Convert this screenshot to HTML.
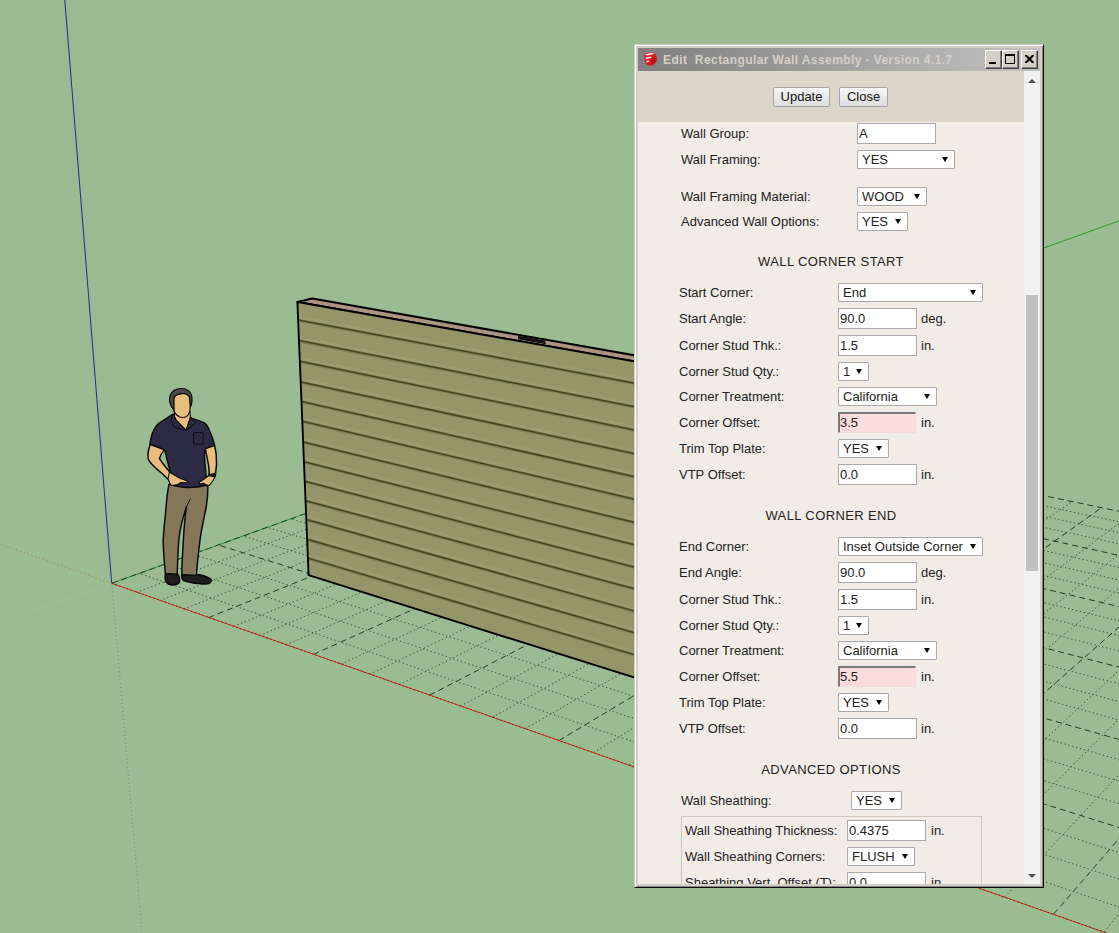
<!DOCTYPE html>
<html lang="en"><head><meta charset="utf-8"><title>Edit Rectangular Wall Assembly</title>
<style>
html,body{margin:0;padding:0}
body{width:1119px;height:933px;overflow:hidden;background:#9bbc92;position:relative;font-family:"Liberation Sans",Arial,sans-serif;font-size:13px;color:#222}
.scene{position:absolute;left:0;top:0}
.ax{stroke-width:1}
.axd{stroke-width:1.1;stroke-dasharray:1.2 2.8}
.grid line{stroke:#1e2a1a;stroke-width:1}
.gd{stroke-dasharray:1.4 2.6;opacity:.72;stroke-width:1.2}
.gm{stroke:#0c140c;stroke-dasharray:6 4;opacity:.9;stroke-width:1.3}
.win{position:absolute;left:634px;top:44px;width:408px;height:842px;background:#d4d0c8;border:1px solid;border-color:#d4d0c8 #0c0c0c #0c0c0c #d4d0c8;box-shadow:inset 1px 1px 0 #fff,inset -1px -1px 0 #858585}
.tb{position:absolute;left:3px;top:3px;width:402px;height:23px;background:linear-gradient(90deg,#808080 0%,#c2c2c2 100%)}
.ico{position:absolute;left:4px;top:3px}
.tt{position:absolute;left:25px;top:4px;font-weight:bold;font-size:12px;line-height:16px;color:#d4d0c8;white-space:pre;letter-spacing:.42px}
.cb{position:absolute;top:2px;width:15px;height:17px;background:#d4d0c8;border:1px solid;border-color:#fff #404040 #404040 #fff;box-shadow:inset -1px -1px 0 #808080;display:block}
.cb svg{position:absolute;left:3px;top:4px}
.mn{position:absolute;left:3px;top:11px;width:7px;height:2px;background:#000}
.mx{position:absolute;left:2px;top:3px;width:8px;height:7px;border:1px solid #000;border-top-width:2px}
.client{position:absolute;left:3px;top:26px;width:402px;height:813px;background:#f1ede6;overflow:hidden}
.hdr{position:absolute;left:0;top:0;width:386px;height:51px;background:#dcd5c9}
.btn{position:absolute;top:16px;height:18px;line-height:18px;text-align:center;border:1px solid #a5a5a5;border-radius:2px;background:linear-gradient(#f8f8f8,#dcdcdc);color:#111}
.l{position:absolute;line-height:16px;height:16px;white-space:nowrap}
.hd{position:absolute;left:0;width:386px;letter-spacing:.38px;text-align:center;line-height:16px;height:16px;white-space:nowrap}
.i{position:absolute;height:19px;line-height:19px;border:1px solid #a9a9a9;background:#fff;text-indent:1px;white-space:nowrap;overflow:hidden}
.ro{background:#fddcdc;border-color:#7a7a7a #f3dcd8 #f3dcd8 #7a7a7a;border-width:2px 1px 1px 2px;height:18px;line-height:17px;text-indent:0}
.s{position:absolute;height:17px;line-height:17px;border:1px solid #a9a9a9;border-radius:1px;background:#fff;text-indent:4px;white-space:nowrap;overflow:hidden}
.s b{position:absolute;right:6px;top:6px;width:0;height:0;border-left:3.4px solid transparent;border-right:3.4px solid transparent;border-top:5.8px solid #000}
.fs{position:absolute;border:1px solid #c9c6c0}
.sb{position:absolute;right:0;top:0;width:16px;height:813px;background:#f1f1f1}
.th{position:absolute;left:2px;top:224px;width:12px;height:276px;background:#c1c1c1}
.up{position:absolute;left:4px;top:8px;border-left:4px solid transparent;border-right:4px solid transparent;border-bottom:4px solid #505050}
.dn{position:absolute;left:4px;bottom:6px;border-left:4px solid transparent;border-right:4px solid transparent;border-top:4px solid #505050}
</style></head><body>
<svg class="scene" width="1119" height="933" viewBox="0 0 1119 933">
<g class="grid"><line class="gd" x1="136.2" y1="592.4" x2="628.2" y2="409.7"/><line class="gd" x1="159.7" y1="600.6" x2="649.3" y2="414.1"/><line class="gd" x1="183.8" y1="609" x2="670.7" y2="418.5"/><line class="gm" x1="208.4" y1="617.7" x2="692.5" y2="423.1"/><line class="gd" x1="233.7" y1="626.5" x2="714.8" y2="427.7"/><line class="gd" x1="259.6" y1="635.6" x2="737.3" y2="432.3"/><line class="gd" x1="286.1" y1="644.9" x2="760.3" y2="437.1"/><line class="gm" x1="313.3" y1="654.5" x2="783.8" y2="441.9"/><line class="gd" x1="341.2" y1="664.2" x2="807.6" y2="446.9"/><line class="gd" x1="369.9" y1="674.3" x2="831.9" y2="451.9"/><line class="gd" x1="399.3" y1="684.6" x2="856.6" y2="457"/><line class="gm" x1="429.5" y1="695.2" x2="881.8" y2="462.2"/><line class="gd" x1="460.5" y1="706.1" x2="907.4" y2="467.5"/><line class="gd" x1="492.4" y1="717.2" x2="933.6" y2="472.9"/><line class="gd" x1="525.2" y1="728.7" x2="960.2" y2="478.5"/><line class="gm" x1="558.9" y1="740.6" x2="987.4" y2="484.1"/><line class="gd" x1="593.6" y1="752.7" x2="1015.1" y2="489.8"/><line class="gd" x1="629.3" y1="765.2" x2="1043.3" y2="495.7"/><line class="gd" x1="666.1" y1="778.1" x2="1072.1" y2="501.6"/><line class="gm" x1="703.9" y1="791.4" x2="1101.5" y2="507.7"/><line class="gd" x1="743" y1="805.1" x2="1131.5" y2="513.9"/><line class="gd" x1="783.2" y1="819.2" x2="1162.1" y2="520.2"/><line class="gd" x1="824.7" y1="833.8" x2="1193.3" y2="526.7"/><line class="gm" x1="867.6" y1="848.8" x2="1225.2" y2="533.3"/><line class="gd" x1="911.8" y1="864.3" x2="1257.8" y2="540"/><line class="gd" x1="957.6" y1="880.3" x2="1291" y2="546.9"/><line class="gd" x1="1004.8" y1="896.9" x2="1325" y2="554"/><line class="gm" x1="1053.7" y1="914" x2="1359.8" y2="561.2"/><line class="gd" x1="1104.3" y1="931.8" x2="1395.3" y2="568.5"/><line class="gd" x1="1156.7" y1="950.1" x2="1431.6" y2="576"/><line class="gd" x1="1211" y1="969.2" x2="1468.7" y2="583.7"/><line class="gm" x1="1267.2" y1="988.9" x2="1506.7" y2="591.6"/><line class="gd" x1="1325.6" y1="1009.4" x2="1545.5" y2="599.6"/><line class="gd" x1="1386.3" y1="1030.6" x2="1585.3" y2="607.8"/><line class="gd" x1="141.3" y1="574.2" x2="1399.4" y2="1002.6"/><line class="gd" x1="168.4" y1="564.4" x2="1412" y2="976.1"/><line class="gd" x1="194.8" y1="554.8" x2="1423.9" y2="950.8"/><line class="gm" x1="220.3" y1="545.6" x2="1435.2" y2="926.7"/><line class="gd" x1="245.1" y1="536.6" x2="1446" y2="903.7"/><line class="gd" x1="269.1" y1="527.9" x2="1456.3" y2="881.8"/><line class="gd" x1="292.5" y1="519.4" x2="1466.2" y2="860.8"/><line class="gm" x1="315.2" y1="511.2" x2="1475.6" y2="840.7"/><line class="gd" x1="337.3" y1="503.2" x2="1484.7" y2="821.5"/><line class="gd" x1="358.8" y1="495.5" x2="1493.3" y2="803.1"/><line class="gd" x1="379.7" y1="487.9" x2="1501.6" y2="785.5"/><line class="gm" x1="400" y1="480.5" x2="1509.6" y2="768.6"/><line class="gd" x1="419.8" y1="473.4" x2="1517.3" y2="752.3"/><line class="gd" x1="439.1" y1="466.4" x2="1524.6" y2="736.6"/><line class="gd" x1="457.9" y1="459.6" x2="1531.7" y2="721.6"/><line class="gm" x1="476.2" y1="453" x2="1538.6" y2="707"/><line class="gd" x1="494" y1="446.5" x2="1545.1" y2="693.1"/><line class="gd" x1="511.4" y1="440.2" x2="1551.5" y2="679.6"/><line class="gd" x1="528.4" y1="434.1" x2="1557.6" y2="666.6"/><line class="gm" x1="545" y1="428.1" x2="1563.5" y2="654"/><line class="gd" x1="561.2" y1="422.2" x2="1569.2" y2="641.9"/><line class="gd" x1="577" y1="416.5" x2="1574.8" y2="630.2"/><line class="gd" x1="592.4" y1="410.9" x2="1580.1" y2="618.8"/><line class="gm" x1="607.5" y1="405.4" x2="1585.3" y2="607.8"/></g>
<line class="ax" stroke="#1d2d90" x1="64.8" y1="0" x2="111.7" y2="583.3"/>
<line class="axd" opacity=".6" stroke="#55749f" x1="111.7" y1="583.3" x2="142" y2="933"/>
<line class="ax" stroke="#d02a1c" x1="111.7" y1="583.3" x2="1119" y2="937.4"/>
<line class="axd" opacity=".6" stroke="#b8684c" x1="111.7" y1="583.3" x2="0" y2="544.2"/>
<line class="ax" stroke="#2f962f" x1="111.7" y1="583.3" x2="1119" y2="220.9"/>
<line class="axd" opacity=".75" stroke="#b2cfa8" x1="111.7" y1="583.3" x2="0" y2="623"/>
<line stroke="#101010" stroke-width="1.1" stroke-dasharray="1.5 2.5" opacity=".42" x1="111.7" y1="583.3" x2="1119" y2="937.4"/>
<line stroke="#0c140c" stroke-width="1.1" stroke-dasharray="6 4" opacity=".55" x1="111.7" y1="583.3" x2="607.5" y2="404.9"/>
<polygon fill="#ab9482" stroke="#000" stroke-width="2.1" stroke-linejoin="round" points="297.4,302 312.2,298.5 700,366.9 700,373"/>
<polygon fill="#94966a" points="297.4,302 700,373 700,698.1 308.6,575.2"/>
<line stroke="#a0a274" stroke-width="3" opacity=".55" x1="298.1" y1="317" x2="700" y2="392.5"/>
<line stroke="#7d7f55" stroke-width="3.2" x1="298.1" y1="320.3" x2="700" y2="395.8"/>
<line stroke="#44461f" stroke-width="1.5" x1="298.1" y1="320" x2="700" y2="395.5"/>
<line stroke="#a0a274" stroke-width="3" opacity=".55" x1="299" y1="337.6" x2="700" y2="416.7"/>
<line stroke="#7d7f55" stroke-width="3.2" x1="299" y1="340.9" x2="700" y2="420"/>
<line stroke="#44461f" stroke-width="1.5" x1="299" y1="340.6" x2="700" y2="419.7"/>
<line stroke="#a0a274" stroke-width="3" opacity=".55" x1="299.8" y1="358.2" x2="700" y2="440.5"/>
<line stroke="#7d7f55" stroke-width="3.2" x1="299.8" y1="361.5" x2="700" y2="443.8"/>
<line stroke="#44461f" stroke-width="1.5" x1="299.8" y1="361.2" x2="700" y2="443.5"/>
<line stroke="#a0a274" stroke-width="3" opacity=".55" x1="300.7" y1="378.9" x2="700" y2="464.7"/>
<line stroke="#7d7f55" stroke-width="3.2" x1="300.7" y1="382.2" x2="700" y2="468"/>
<line stroke="#44461f" stroke-width="1.5" x1="300.7" y1="381.9" x2="700" y2="467.7"/>
<line stroke="#a0a274" stroke-width="3" opacity=".55" x1="301.5" y1="398.4" x2="700" y2="488.6"/>
<line stroke="#7d7f55" stroke-width="3.2" x1="301.5" y1="401.7" x2="700" y2="491.9"/>
<line stroke="#44461f" stroke-width="1.5" x1="301.5" y1="401.4" x2="700" y2="491.6"/>
<line stroke="#a0a274" stroke-width="3" opacity=".55" x1="302.3" y1="418.2" x2="700" y2="511.6"/>
<line stroke="#7d7f55" stroke-width="3.2" x1="302.3" y1="421.5" x2="700" y2="514.9"/>
<line stroke="#44461f" stroke-width="1.5" x1="302.3" y1="421.2" x2="700" y2="514.6"/>
<line stroke="#a0a274" stroke-width="3" opacity=".55" x1="303.1" y1="438.9" x2="700" y2="535.3"/>
<line stroke="#7d7f55" stroke-width="3.2" x1="303.1" y1="442.2" x2="700" y2="538.6"/>
<line stroke="#44461f" stroke-width="1.5" x1="303.1" y1="441.9" x2="700" y2="538.3"/>
<line stroke="#a0a274" stroke-width="3" opacity=".55" x1="304" y1="458.7" x2="700" y2="558.3"/>
<line stroke="#7d7f55" stroke-width="3.2" x1="304" y1="462" x2="700" y2="561.6"/>
<line stroke="#44461f" stroke-width="1.5" x1="304" y1="461.7" x2="700" y2="561.3"/>
<line stroke="#a0a274" stroke-width="3" opacity=".55" x1="304.8" y1="478.2" x2="700" y2="581.2"/>
<line stroke="#7d7f55" stroke-width="3.2" x1="304.8" y1="481.5" x2="700" y2="584.5"/>
<line stroke="#44461f" stroke-width="1.5" x1="304.8" y1="481.2" x2="700" y2="584.2"/>
<line stroke="#a0a274" stroke-width="3" opacity=".55" x1="305.5" y1="497.7" x2="700" y2="603.3"/>
<line stroke="#7d7f55" stroke-width="3.2" x1="305.5" y1="501" x2="700" y2="606.6"/>
<line stroke="#44461f" stroke-width="1.5" x1="305.5" y1="500.7" x2="700" y2="606.3"/>
<line stroke="#a0a274" stroke-width="3" opacity=".55" x1="306.3" y1="516.5" x2="700" y2="626.4"/>
<line stroke="#7d7f55" stroke-width="3.2" x1="306.3" y1="519.8" x2="700" y2="629.7"/>
<line stroke="#44461f" stroke-width="1.5" x1="306.3" y1="519.5" x2="700" y2="629.4"/>
<line stroke="#a0a274" stroke-width="3" opacity=".55" x1="307.1" y1="536.3" x2="700" y2="648.4"/>
<line stroke="#7d7f55" stroke-width="3.2" x1="307.1" y1="539.6" x2="700" y2="651.7"/>
<line stroke="#44461f" stroke-width="1.5" x1="307.1" y1="539.3" x2="700" y2="651.4"/>
<line stroke="#a0a274" stroke-width="3" opacity=".55" x1="307.9" y1="555.1" x2="700" y2="671.1"/>
<line stroke="#7d7f55" stroke-width="3.2" x1="307.9" y1="558.4" x2="700" y2="674.4"/>
<line stroke="#44461f" stroke-width="1.5" x1="307.9" y1="558.1" x2="700" y2="674.1"/>
<polyline fill="none" stroke="#000" stroke-width="1.9" stroke-linejoin="round" points="700,373 297.4,302 308.6,575.2 700,698.1"/>
<polygon fill="#111" points="518,335.8 545,340.6 546,344.2 518,339.2"/>
</svg>
<svg class="scene" width="1119" height="933" viewBox="0 0 1119 933">
<g stroke="#0a0a0a" stroke-width="1.5" stroke-linejoin="round" stroke-linecap="round">
<!-- shoes -->
<path fill="#1f1f1f" d="M165.6 573 C164.6 577.5 165 582 168.4 584 C172.4 585.6 177.4 585 179.4 582.6 C180 579.6 179 576 177.4 573.6 Z"/>
<path fill="#1f1f1f" d="M182 574.4 C181.4 577.2 182 579.6 184 580.8 C190 582.8 198 584.2 206 584 C210 583.8 212 581.8 211 579.6 C208 577 202 575 196.6 574.6 Z"/>
<!-- pants -->
<path fill="#87775a" d="M168.9 484.6 C167.4 492 166.6 500 166 508 C165 520 163.6 530 163.2 540 C163.2 552 164.4 562 165.4 573.4 L177.2 574.2 C177.6 562 178 550 178.8 540 C180 528 183.4 516 186.4 507 C185 518 183.8 530 183.4 540 C182.6 552 182 562 181.8 574.4 L196.4 575.6 C197 564 198.6 552 200 540 C201.6 528 204.6 516 206.4 506 C207.6 498 208 492 207.8 485.6 Z"/>
<path fill="none" stroke-width="1" d="M186.4 507 C187.6 504 189 501.6 190.4 499"/>
<!-- arms -->
<path fill="#e9bd7d" d="M150.6 443.6 C148.6 448.6 147.4 454.6 148.2 458.8 C149.6 463.4 155 467.6 160.4 472 C164.4 475.4 168.6 480.4 172.6 482.6 L178.6 482.2 C177.6 479 174.6 476.4 171.2 473.6 C167 468.8 162.4 463.6 159.4 458.4 C160.4 455.2 162.4 452.2 164.6 449.4 Z"/>
<path fill="#e9bd7d" d="M205.2 448.2 C206.2 454.2 207.8 460.2 208.6 465.8 C209 469.4 209.4 472.4 209 475.2 C207.4 478.4 205.4 481 203.6 483.2 L209.2 484.6 C212 481.4 214.6 478.4 215.4 474.6 C216.6 468.6 216.8 460.4 216.2 454.4 C215.8 451 215.2 448 214.4 445 Z"/>
<path fill="#222" stroke-width=".8" d="M209.2 474.4 L215.6 473 L215.8 475.4 L209.2 476.6 Z"/>
<!-- shirt -->
<path fill="#2d2a44" d="M172.6 414.4 C167.6 417.6 162.4 420.8 158 424 C154.6 427.4 152.6 432 151.4 436.6 C150.6 439.6 150.2 442 150 444.2 L164.4 449.8 C165.2 452 165.8 454 166.2 456 C167.4 462 169.4 468 170.8 473.4 C171 477 170.6 481 170 484 C176 486.6 183 487.6 189.6 487.4 C196 487.4 202.6 486.2 207.8 484.2 C207.2 481 206.4 478 206 475 C205.4 468 204.6 461 204.4 455 C204.6 452.6 205 450.6 205.4 448.6 L214.6 445.4 C213.6 440.6 211.8 435.6 209.8 431.2 C208.4 427.4 206.6 424.6 204.2 422.8 C199.6 420.8 194.6 419.4 190.4 417.8 L186.2 430.4 L175.6 419.4 Z"/>
<path fill="#e9bd7d" stroke-width="1.1" d="M169.4 472 C172 473.5 176 476 180.5 478.5 L187.5 481 L187 482.8 L181 482.5 C179 484.5 175 485.6 171 485 C169.5 483 168.5 480.5 168 479 Z"/>
<path fill="#e9bd7d" stroke-width="1.1" d="M208.4 475.8 C206 477.5 202.5 480.5 199 482.3 L199.6 484 L203.5 483.2 C205 484.5 207.5 485.6 209.2 485.4 C211.5 483 214 479.5 215 476.6 Z"/>
<rect fill="none" stroke-width=".9" x="193.6" y="432.6" width="9.6" height="11.6" rx="1"/>
<!-- neck -->
<path fill="#e9bd7d" stroke-width="1.1" d="M174.4 411.6 L174.6 416.4 L175.6 419.4 L186.2 430.4 L190.4 417.8 L190 411.6 Z"/>
<!-- collar -->
<path fill="#2d2a44" stroke-width="1" d="M173.6 414 L170.8 420.2 L174.6 427.4 L186.2 430.6 L175.6 419.4 Z"/>
<path fill="#2d2a44" stroke-width="1" d="M190.6 417.4 L195.6 422.8 L186.2 430.6 Z"/>
<!-- face -->
<path fill="#e9bd7d" stroke-width="1.1" d="M173.8 398.4 C174.2 395.6 177.2 394.2 181 393.6 C185.4 393 188.8 394.6 189.8 398.2 C190.4 402.6 190.4 407.4 189.8 411.2 C189 414.2 187.8 416 186.2 416.8 C184 417.6 181.6 417.6 179.6 417 C177.2 416 175.2 413.6 173.8 411 Z"/>
<!-- hair -->
<path fill="#4a4a48" stroke-width="1.1" d="M169.6 401.6 C169.2 397 170.6 392.8 174.2 390.2 C178.4 387.8 184.4 387.8 188.6 390.6 C191.4 393 192.4 397.4 192 401.6 C191.8 404 191.2 405.8 190.4 406.8 L189.8 398.2 C188.8 394.6 185.4 393 181 393.6 C177.2 394.2 174.2 395.6 173.8 398.4 L174 410.4 C172 408.4 170.4 405.4 169.6 401.6 Z"/>
</g>
</svg>

<div class="win">
<div class="tb"><svg class="ico" width="16" height="16" viewBox="0 0 16 16"><path d="M2.4 4.6 Q2.2 2.6 4.6 2 L10.2 1 Q12.6 1.6 13.8 3.8 Q15 7.4 14.2 10.6 Q12.6 13.8 8.8 14.6 Q5 14.8 3.6 12.2 Q2.2 8.6 2.4 4.6 Z" fill="#e2141c"/><path d="M8.8 14.6 Q12.6 13.8 14.2 10.6 Q14.8 8 14.4 5.6 L9.6 8 Q9.6 11.6 8.8 14.6 Z" fill="#c40f16"/><path d="M2.6 3.6 L10.4 1.6 L12.4 3 L5.4 4.4 Z" fill="#fff" opacity=".92"/><path d="M3.2 6.6 L9 5.4 L9.6 6.8 L4.2 8.2 Z" fill="#fff" opacity=".88"/><path d="M4 10 L7 9.4 L7.4 10.6 L4.6 11.4 Z" fill="#fff" opacity=".85"/></svg><span class="tt">Edit&nbsp; Rectangular Wall Assembly - Version 4.1.7</span><span class="cb" style="left:347px"><i class="mn"></i></span><span class="cb" style="left:364px"><i class="mx"></i></span><span class="cb" style="left:383px"><svg width="9" height="8" viewBox="0 0 9 8"><path d="M0.5 0 L8.5 8 M8.5 0 L0.5 8" stroke="#000" stroke-width="2.1"/></svg></span></div>
<div class="client">
<div class="hdr"><span class="btn" style="left:135px;width:55px">Update</span><span class="btn" style="left:201px;width:47px">Close</span></div>
<div class="l" style="left:43px;top:54.5px">Wall Group:</div>
<div class="i" style="left:219px;top:52px;width:77px">A</div>
<div class="l" style="left:43px;top:80.5px">Wall Framing:</div>
<div class="s" style="left:219px;top:79px;width:96px">YES<b></b></div>
<div class="l" style="left:43px;top:117.5px">Wall Framing Material:</div>
<div class="s" style="left:219px;top:116px;width:68px">WOOD<b></b></div>
<div class="l" style="left:43px;top:142.5px">Advanced Wall Options:</div>
<div class="s" style="left:219px;top:141px;width:49px">YES<b></b></div>
<div class="hd" style="top:182.5px">WALL CORNER START</div>
<div class="l" style="left:41px;top:213.5px">Start Corner:</div>
<div class="s" style="left:200px;top:212px;width:143px">End<b></b></div>
<div class="l" style="left:41px;top:239.5px">Start Angle:</div>
<div class="i" style="left:200px;top:237px;width:77px">90.0</div>
<div class="l" style="left:283px;top:239.5px">deg.</div>
<div class="l" style="left:41px;top:266.5px">Corner Stud Thk.:</div>
<div class="i" style="left:200px;top:264px;width:77px">1.5</div>
<div class="l" style="left:283px;top:266.5px">in.</div>
<div class="l" style="left:41px;top:292.5px">Corner Stud Qty.:</div>
<div class="s" style="left:200px;top:291px;width:29px">1<b></b></div>
<div class="l" style="left:41px;top:318px">Corner Treatment:</div>
<div class="s" style="left:200px;top:316px;width:97px">California<b></b></div>
<div class="l" style="left:41px;top:344px">Corner Offset:</div>
<div class="i ro" style="left:200px;top:341px;width:75px">3.5</div>
<div class="l" style="left:283px;top:344px">in.</div>
<div class="l" style="left:41px;top:370px">Trim Top Plate:</div>
<div class="s" style="left:200px;top:368px;width:49px">YES<b></b></div>
<div class="l" style="left:41px;top:396px">VTP Offset:</div>
<div class="i" style="left:200px;top:393px;width:77px">0.0</div>
<div class="l" style="left:283px;top:396px">in.</div>
<div class="hd" style="top:436.5px">WALL CORNER END</div>
<div class="l" style="left:41px;top:467.5px">End Corner:</div>
<div class="s" style="left:200px;top:466px;width:143px">Inset Outside Corner<b></b></div>
<div class="l" style="left:41px;top:493.5px">End Angle:</div>
<div class="i" style="left:200px;top:491px;width:77px">90.0</div>
<div class="l" style="left:283px;top:493.5px">deg.</div>
<div class="l" style="left:41px;top:520.5px">Corner Stud Thk.:</div>
<div class="i" style="left:200px;top:518px;width:77px">1.5</div>
<div class="l" style="left:283px;top:520.5px">in.</div>
<div class="l" style="left:41px;top:546.5px">Corner Stud Qty.:</div>
<div class="s" style="left:200px;top:545px;width:29px">1<b></b></div>
<div class="l" style="left:41px;top:572px">Corner Treatment:</div>
<div class="s" style="left:200px;top:570px;width:97px">California<b></b></div>
<div class="l" style="left:41px;top:598px">Corner Offset:</div>
<div class="i ro" style="left:200px;top:595px;width:75px">5.5</div>
<div class="l" style="left:283px;top:598px">in.</div>
<div class="l" style="left:41px;top:624px">Trim Top Plate:</div>
<div class="s" style="left:200px;top:622px;width:49px">YES<b></b></div>
<div class="l" style="left:41px;top:650px">VTP Offset:</div>
<div class="i" style="left:200px;top:647px;width:77px">0.0</div>
<div class="l" style="left:283px;top:650px">in.</div>
<div class="hd" style="top:690.5px">ADVANCED OPTIONS</div>
<div class="l" style="left:43px;top:721.5px">Wall Sheathing:</div>
<div class="s" style="left:213px;top:720px;width:49px">YES<b></b></div>
<div class="fs" style="left:43px;top:745px;width:299px;height:90px"></div>
<div class="l" style="left:47px;top:751.5px">Wall Sheathing Thickness:</div>
<div class="i" style="left:209px;top:749px;width:77px">0.4375</div>
<div class="l" style="left:293px;top:751.5px">in.</div>
<div class="l" style="left:47px;top:777.5px">Wall Sheathing Corners:</div>
<div class="s" style="left:209px;top:776px;width:66px">FLUSH<b></b></div>
<div class="l" style="left:47px;top:803.5px">Sheathing Vert. Offset (T):</div>
<div class="i" style="left:209px;top:801px;width:77px">0.0</div>
<div class="l" style="left:293px;top:803.5px">in.</div>
<div class="sb"><i class="up"></i><i class="th"></i><i class="dn"></i></div>
</div></div>
</body></html>
